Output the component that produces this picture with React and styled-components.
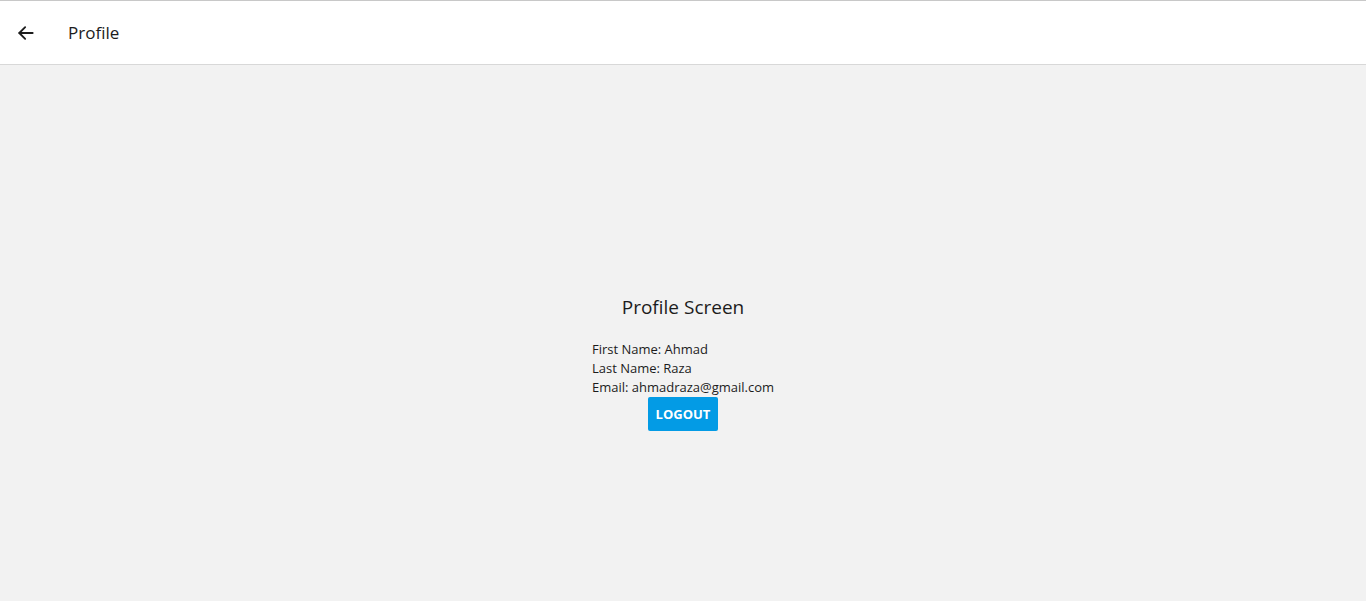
import React from 'react';
import styled, { createGlobalStyle } from 'styled-components';

const GlobalStyle = createGlobalStyle`
  html, body {
    margin: 0;
    padding: 0;
    height: 100%;
  }
  body {
    font-family: "Open Sans", "Noto Sans", sans-serif;
    background: #f2f2f2;
  }
  #root {
    min-height: 100vh;
    display: flex;
    flex-direction: column;
  }
`;

const Page = styled.div`
  flex: 1;
  display: flex;
  flex-direction: column;
  border-top: 1px solid #c8c8c8;
`;

const Header = styled.header`
  height: 64px;
  background: #ffffff;
  border-bottom: 1px solid #d8d8d8;
  display: flex;
  align-items: center;
  padding: 0 16px;
  box-sizing: border-box;
`;

const BackButton = styled.button`
  border: none;
  background: none;
  padding: 0;
  width: 20px;
  height: 20px;
  display: flex;
  align-items: center;
  justify-content: center;
  color: #1c1c1c;
  cursor: pointer;
`;

const Title = styled.h1`
  margin: 0 0 0 32px;
  font-size: 17px;
  font-weight: 500;
  color: #1c1c1c;
`;

const Body = styled.main`
  flex: 1;
  display: flex;
  flex-direction: column;
  align-items: center;
  padding-top: 229px;
`;

const ScreenTitle = styled.h2`
  margin: 0 0 20px;
  font-size: 19px;
  font-weight: 400;
  color: #1c1c1c;
  line-height: 26px;
`;

const Info = styled.div`
  display: flex;
  flex-direction: column;
  align-items: flex-start;
`;

const Line = styled.div`
  font-size: 13px;
  line-height: 19px;
  color: #1c1c1c;
`;

const LogoutButton = styled.button`
  align-self: center;
  margin-top: 0;
  background: #039be5;
  color: #ffffff;
  border: none;
  border-radius: 2px;
  font-family: inherit;
  font-size: 13px;
  font-weight: 700;
  padding: 0 8px;
  height: 34px;
  cursor: pointer;
`;

export default function App() {
  return (
    <>
      <GlobalStyle />
      <Page>
        <Header>
          <BackButton aria-label="back">
            <svg width="20" height="20" viewBox="0 0 24 24" fill="none" stroke="currentColor" strokeWidth="2.2" strokeLinecap="round" strokeLinejoin="round">
              <path d="M20 12H4" />
              <path d="M11 5l-7 7 7 7" />
            </svg>
          </BackButton>
          <Title>Profile</Title>
        </Header>
        <Body>
          <ScreenTitle>Profile Screen</ScreenTitle>
          <Info>
            <Line>First Name: Ahmad</Line>
            <Line>Last Name: Raza</Line>
            <Line>Email: ahmadraza@gmail.com</Line>
            <LogoutButton>LOGOUT</LogoutButton>
          </Info>
        </Body>
      </Page>
    </>
  );
}
